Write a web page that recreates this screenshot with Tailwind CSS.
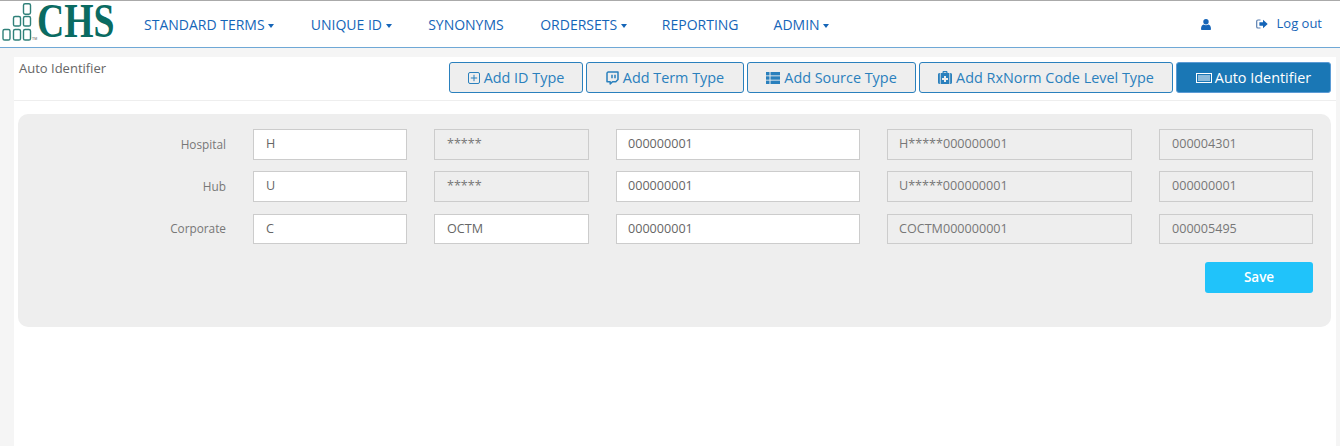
<!DOCTYPE html>
<html lang="en">
<head>
  <meta charset="UTF-8">
  <title>Auto Identifier</title>
  <script src="https://cdn.jsdelivr.net/npm/@tailwindcss/browser@4"></script>
</head>
<body class="h-[446px] overflow-hidden bg-[#f5f5f5] font-['Open_Sans',sans-serif] text-[12.6px] text-[#777]">
<!-- Navbar -->
<header class="flex h-[48px] items-center border-t border-b border-t-[#aaa] border-b-[#6fa8d6] bg-white">
  <div class="flex h-full w-[144px] shrink-0 items-start">
    <svg width="38" height="40" viewBox="0 2 38 40" fill="none" stroke="#2f8079" stroke-width="1.4" class="mt-[1px] shrink-0">
      <rect x="23.500" y="3.700" width="7" height="10.500" rx="1.600"/>
      <rect x="13.500" y="16.500" width="7" height="9.500" rx="1.600"/>
      <rect x="23.500" y="16.500" width="7" height="9.500" rx="1.600"/>
      <rect x="3" y="29.500" width="7" height="10.500" rx="1.600"/>
      <rect x="13.500" y="29.500" width="7" height="10.500" rx="1.600"/>
      <rect x="23.500" y="29.500" width="7" height="10.500" rx="1.600"/>
      <text x="32" y="39.500" font-size="3.500" fill="#555" stroke="none" font-family="Liberation Sans">TM</text>
    </svg>
    <span class="ml-[-1px] mt-[-2px] block origin-left scale-x-[.77] font-['Liberation_Serif',serif] text-[49px] leading-[44px] font-bold text-[#0a6b62]">CHS</span>
  </div>
  <nav class="flex items-center text-[14px] font-medium text-[#1565b8]">
    <a class="mr-[36.5px]">STANDARD TERMS <span class="inline-block border-x-[3.5px] border-t-[4px] border-x-transparent border-t-[#1565b8] align-middle"></span></a>
    <a class="mr-[36.5px]">UNIQUE ID <span class="inline-block border-x-[3.5px] border-t-[4px] border-x-transparent border-t-[#1565b8] align-middle"></span></a>
    <a class="mr-[36.5px]">SYNONYMS</a>
    <a class="mr-[35px]">ORDERSETS <span class="inline-block border-x-[3.5px] border-t-[4px] border-x-transparent border-t-[#1565b8] align-middle"></span></a>
    <a class="mr-[35px]">REPORTING</a>
    <a>ADMIN <span class="inline-block border-x-[3.5px] border-t-[4px] border-x-transparent border-t-[#1565b8] align-middle"></span></a>
  </nav>
  <div class="ml-auto flex items-center pr-[18px] text-[13px] font-medium text-[#1565b8]">
    <svg width="10" height="11" viewBox="0 0 10 11" fill="#1565b8" class="mr-[45px]"><circle cx="5" cy="2.800" r="2.700"/><path d="M0 10.200C0 7.400 1.200 5.700 2.600 5.500 3.300 6 4.100 6.300 5 6.300S6.700 6 7.400 5.500C8.800 5.700 10 7.400 10 10.200 10 10.700 9.600 11 9.200 11H.8C.4 11 0 10.700 0 10.200Z"/></svg>
    <svg width="12" height="10" viewBox="0 0 12 10" class="mr-[9px]"><path d="M4.500 1H2A1.300 1.300 0 0 0 .7 2.300v5.400A1.300 1.300 0 0 0 2 9h2.500" fill="none" stroke="#5a7fb0" stroke-width="1.200"/><path d="M7 .8 11.700 5 7 9.200V6.700H3.400V3.300H7Z" fill="#1565b8"/></svg>
    <span>Log out</span>
  </div>
</header>

<!-- Page -->
<main class="mt-[9px] ml-[14px] mr-[4px] h-[389px] bg-white">
  <div class="flex h-[44px] justify-between border-b border-[#eee] pl-[5px] pr-[5px]">
    <h1 class="mt-[2px] text-[13px] leading-[18px] font-medium text-[#666]">Auto Identifier</h1>
    <div class="mt-[5px] flex h-[31px] gap-[3px] text-[14.4px] text-[#2a80bd]">
      <button class="flex w-[134px] items-center justify-center gap-[4px] rounded-[3px] border border-[#2a80bd] bg-[#eee]">
        <svg width="12" height="12" viewBox="0 0 12 12" fill="none" stroke="#2a80bd"><rect x=".5" y=".5" width="11" height="11" rx="1.500"/><path d="M6 2.800v6.400M2.800 6h6.400"/></svg>
        Add ID Type
      </button>
      <button class="flex w-[158px] items-center justify-center gap-[4px] rounded-[3px] border border-[#2a80bd] bg-[#eee]">
        <svg width="13" height="14" viewBox="0 0 13 14" fill="none" stroke="#2a80bd" stroke-width="1.500"><path d="M2 1h10v7.500L9.800 10.700H6.500L4.200 13v-2.300H1V2Z" stroke-linejoin="round"/><path d="M6 3.800v3.400M9 3.800v3.400"/></svg>
        Add Term Type
      </button>
      <button class="flex w-[169px] items-center justify-center gap-[4px] rounded-[3px] border border-[#2a80bd] bg-[#eee]">
        <svg width="14" height="12" viewBox="0 0 14 12" fill="#2a80bd"><rect y="0" width="3.500" height="3.400"/><rect x="4.500" y="0" width="9.500" height="3.400"/><rect y="4.300" width="3.500" height="3.400"/><rect x="4.500" y="4.300" width="9.500" height="3.400"/><rect y="8.600" width="3.500" height="3.400"/><rect x="4.500" y="8.600" width="9.500" height="3.400"/></svg>
        Add Source Type
      </button>
      <button class="flex w-[254px] items-center justify-center gap-[4px] rounded-[3px] border border-[#2a80bd] bg-[#eee]">
        <svg width="14" height="13" viewBox="0 0 14 13"><path fill-rule="evenodd" fill="#2a80bd" d="M4.500 2V1.200C4.500.5 5 0 5.700 0h2.600c.7 0 1.200.5 1.200 1.200V2h3C13.300 2 14 2.700 14 3.500v8c0 .8-.7 1.500-1.500 1.500h-11C.7 13 0 12.300 0 11.500v-8C0 2.700.7 2 1.500 2ZM5.700 1.200V2h2.600v-.8ZM6 5v2H4v2h2v2h2V9h2V7H8V5Z"/><path d="M2.300 2v11M11.700 2v11" stroke="#eee" stroke-width=".8"/></svg>
        Add RxNorm Code Level Type
      </button>
      <button class="flex w-[155px] items-center justify-center gap-[3px] rounded-[3px] border border-[#5b9bd5] bg-[#1a77b5] font-medium text-white">
        <svg width="16" height="10" viewBox="0 0 16 10" fill="none" stroke="#fff"><rect x=".5" y=".5" width="15" height="9"/><path d="M2 3h12M2 5h12M2 7h12"/></svg>
        Auto Identifier
      </button>
    </div>
  </div>

  <!-- Form -->
  <section class="mt-[13px] ml-[4px] mr-[5px] h-[213px] rounded-[10px] bg-[#eee] pt-[15px] pl-[235px]">
    <div class="flex h-[31px] items-center gap-[27px]">
      <label class="ml-[-120px] w-[93px] text-right text-[11.8px]">Hospital</label>
      <div class="flex h-full w-[154px] items-center border border-[#ccc] bg-white px-[12px] text-[#666]">H</div>
      <div class="flex h-full w-[155px] items-center border border-[#ccc] bg-[#eee] px-[12px]">*****</div>
      <div class="flex h-full w-[244px] items-center border border-[#ccc] bg-white px-[11px] text-[#666]">000000001</div>
      <div class="flex h-full w-[245px] items-center border border-[#ccc] bg-[#eee] px-[11px]">H*****000000001</div>
      <div class="flex h-full w-[154px] items-center border border-[#ccc] bg-[#eee] px-[12px]">000004301</div>
    </div>
    <div class="mt-[11px] flex h-[31px] items-center gap-[27px]">
      <label class="ml-[-120px] w-[93px] text-right text-[11.8px]">Hub</label>
      <div class="flex h-full w-[154px] items-center border border-[#ccc] bg-white px-[12px] text-[#666]">U</div>
      <div class="flex h-full w-[155px] items-center border border-[#ccc] bg-[#eee] px-[12px]">*****</div>
      <div class="flex h-full w-[244px] items-center border border-[#ccc] bg-white px-[11px] text-[#666]">000000001</div>
      <div class="flex h-full w-[245px] items-center border border-[#ccc] bg-[#eee] px-[11px]">U*****000000001</div>
      <div class="flex h-full w-[154px] items-center border border-[#ccc] bg-[#eee] px-[12px]">000000001</div>
    </div>
    <div class="mt-[12px] flex h-[30px] items-center gap-[27px]">
      <label class="ml-[-120px] w-[93px] text-right text-[11.8px]">Corporate</label>
      <div class="flex h-full w-[154px] items-center border border-[#ccc] bg-white px-[12px] text-[#666]">C</div>
      <div class="flex h-full w-[155px] items-center border border-[#ccc] bg-white px-[12px] text-[#666]">OCTM</div>
      <div class="flex h-full w-[244px] items-center border border-[#ccc] bg-white px-[11px] text-[#666]">000000001</div>
      <div class="flex h-full w-[245px] items-center border border-[#ccc] bg-[#eee] px-[11px]">COCTM000000001</div>
      <div class="flex h-full w-[154px] items-center border border-[#ccc] bg-[#eee] px-[12px]">000005495</div>
    </div>
    <div class="mt-[18px] flex justify-end pr-[18px]">
      <button class="h-[31px] w-[108px] rounded-[3px] bg-[#20c3fa] text-[13.5px] font-semibold text-white">Save</button>
    </div>
  </section>
</main>
</body>
</html>
